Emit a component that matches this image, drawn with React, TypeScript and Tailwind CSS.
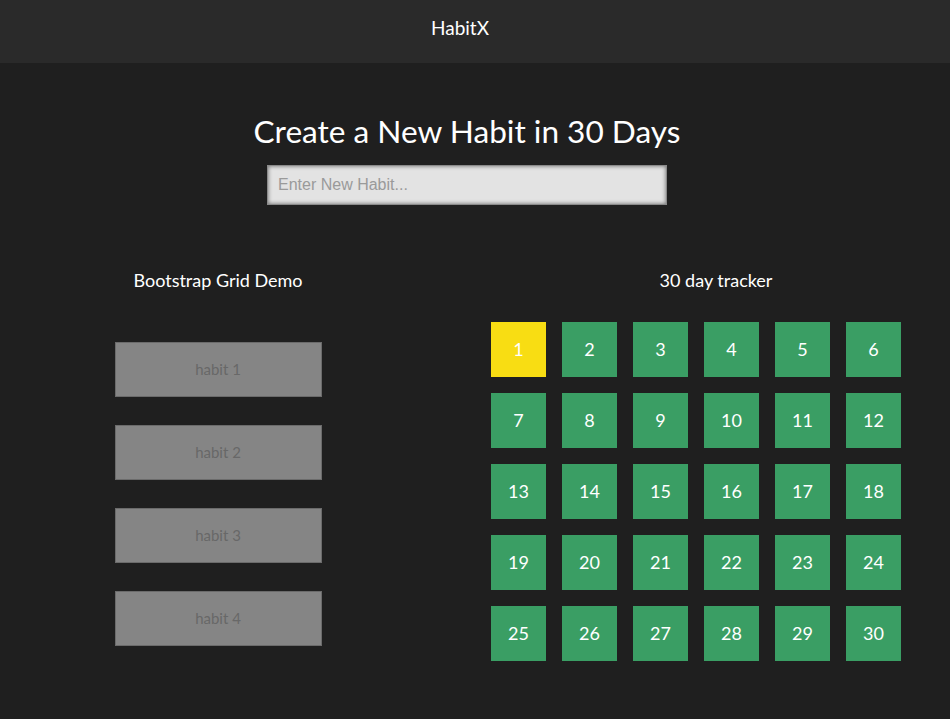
import React from "react";

const days = Array.from({ length: 30 }, (_, i) => i + 1);
const habits = ["habit 1", "habit 2", "habit 3", "habit 4"];

export default function App() {
  return (
    <div className="min-h-[719px] bg-[#1f1f1f] font-['Lato','Open_Sans',sans-serif] text-white">
      {/* Navbar */}
      <header className="h-[63px] bg-[#2a2a2a] flex items-center">
        <div className="w-[920px] flex justify-center">
          <span className="text-[19px] -mt-[6px]">HabitX</span>
        </div>
      </header>

      {/* Title + input */}
      <section className="w-[934px] flex flex-col items-center pt-[48px]">
        <h1 className="text-[31.6px] leading-[40px]">Create a New Habit in 30 Days</h1>
        <input
          type="text"
          placeholder="Enter New Habit..."
          className="mt-[14px] w-[400px] h-[40px] bg-[#e3e3e3] border border-[#8a8a8a] shadow-[inset_0_0_4px_rgba(0,0,0,0.55)] px-[10px] text-[16px] font-['Liberation_Sans',sans-serif] text-[#555] placeholder:text-[#9a9a9a] outline-none"
        />
      </section>

      {/* Columns */}
      <section className="flex mt-[64px]">
        <div className="w-[436px] flex flex-col items-center">
          <h2 className="text-[18px] leading-[22px]">Bootstrap Grid Demo</h2>
          <div className="mt-[51px] flex flex-col gap-[28px]">
            {habits.map((h) => (
              <div
                key={h}
                className="w-[207px] h-[55px] bg-[#858585] border border-[#6b6b6b] flex items-center justify-center text-[15px] text-[#686868]"
              >
                {h}
              </div>
            ))}
          </div>
        </div>

        <div className="w-[468px] ml-[46px] flex flex-col">
          <h2 className="text-[18px] leading-[22px] text-center">30 day tracker</h2>
          <div className="mt-[31px] ml-[9px] grid grid-cols-[repeat(6,55px)] gap-[16px]">
            {days.map((d) => (
              <div
                key={d}
                className={
                  "h-[55px] flex items-center justify-center text-[18px] " +
                  (d === 1 ? "bg-[#f8dd13]" : "bg-[#3a9e64]")
                }
              >
                {d}
              </div>
            ))}
          </div>
        </div>
      </section>
    </div>
  );
}
